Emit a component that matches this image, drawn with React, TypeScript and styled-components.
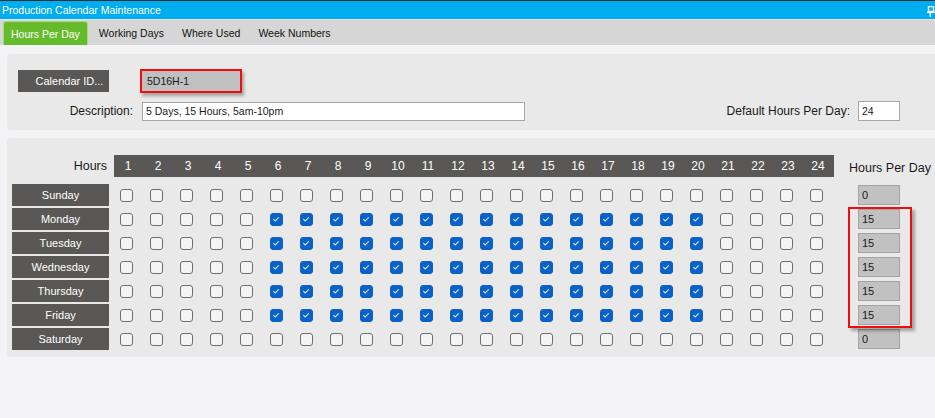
import React from "react";
import styled, { createGlobalStyle } from "styled-components";

const GlobalStyle = createGlobalStyle`
  html, body {
    margin: 0;
    padding: 0;
    background: #f3f3f5;
    font-family: "Liberation Sans", Arial, sans-serif;
    font-size: 12px;
    color: #1a1a1a;
    overflow: hidden;
  }
`;

const Page = styled.div`
  width: 935px;
  height: 418px;
  background: #f3f3f5;
  overflow: hidden;
`;

const TitleBar = styled.div`
  height: 18px;
  border-top: 1px solid #2d2d2d;
  background: #00adef;
  color: #fff;
  display: flex;
  align-items: center;
  justify-content: space-between;
  padding-left: 2px;
  font-size: 10.5px;
  border-bottom: 1px solid #e4e4e4;
`;

const PinIcon = () => (
  <svg width="8" height="11" viewBox="0 0 8 11" style={{ marginTop: 3 }}>
    <rect x="1.5" y="0.5" width="5" height="5" fill="none" stroke="#fff" strokeWidth="1.4" />
    <rect x="0" y="5.5" width="8" height="1.6" fill="#fff" />
    <rect x="2.6" y="7" width="1.4" height="4" fill="#fff" />
  </svg>
);

const TabStrip = styled.div`
  height: 25px;
  background: #d6d6d6;
  display: flex;
  align-items: flex-end;
  padding-left: 3px;
`;

const Tab = styled.div<{ $active?: boolean }>`
  height: ${(p) => (p.$active ? "24px" : "25px")};
  box-sizing: border-box;
  padding: 0 ${(p) => (p.$active ? "7px" : "9px")};
  margin-right: ${(p) => (p.$active ? "2px" : "0")};
  display: flex;
  align-items: center;
  font-size: 10.5px;
  color: ${(p) => (p.$active ? "#fff" : "#111")};
  background: ${(p) => (p.$active ? "#66bb2d" : "transparent")};
  border: ${(p) => (p.$active ? "1px solid #a9da7d" : "none")};
  border-bottom: none;
  border-radius: 3px 3px 0 0;
`;

const Panel = styled.div<{ $pt: number; $pb: number }>`
  margin: 0 -6px 0 7px;
  background: #e9e9e9;
  border-radius: 4px;
  padding: ${(p) => p.$pt}px 0 ${(p) => p.$pb}px 0;
`;

const TopPanel = styled(Panel)`
  margin-top: 9px;
  display: flex;
  flex-direction: column;
  gap: 8px;
`;

const BottomPanel = styled(Panel)`
  margin-top: 8px;
  padding-left: 5px;
`;

const FormRow = styled.div`
  display: flex;
  align-items: center;
  padding-right: 41px;
`;

const DarkButton = styled.div`
  margin-left: 11px;
  width: 91px;
  height: 22px;
  background: #595856;
  color: #fff;
  font-size: 11px;
  display: flex;
  align-items: center;
  justify-content: center;
  padding-left: 12px;
  box-sizing: border-box;
`;

const IdField = styled.div`
  margin-left: 31px;
  width: 93px;
  height: 20px;
  border: 2px solid #f20d0d;
  background: #c0c0c0;
  display: flex;
  align-items: center;
  padding-left: 5px;
  font-size: 10.5px;
  box-sizing: content-box;
  box-shadow: 2px 3px 3px rgba(0, 0, 0, 0.3);
`;

const Label = styled.div<{ $w?: number }>`
  width: ${(p) => (p.$w ? `${p.$w}px` : "auto")};
  text-align: right;
`;

const TextBox = styled.div<{ $w: number; $h?: number; $ml: number }>`
  width: ${(p) => p.$w}px;
  height: ${(p) => p.$h ?? 19}px;
  margin-left: ${(p) => p.$ml}px;
  box-sizing: border-box;
  background: #fff;
  border: 1px solid #a7a7a7;
  display: flex;
  align-items: center;
  padding-left: 3px;
  font-size: 10.5px;
`;

const Spacer = styled.div`
  flex: 1;
`;

const HeaderRow = styled.div`
  display: flex;
  align-items: center;
  height: 22px;
  margin-bottom: 7px;
`;

const HoursLabel = styled.div`
  width: 95px;
  padding-right: 2px;
  text-align: right;
  font-size: 12.5px;
  margin-right: 5px;
`;

const HourBar = styled.div`
  width: 720px;
  height: 22px;
  background: #595856;
  display: grid;
  grid-template-columns: repeat(24, 30px);
  align-items: center;
  color: #fff;
  font-size: 12px;
`;

const HourNum = styled.div`
  text-align: center;
  padding-right: 2px;
`;

const PerDayLabel = styled.div`
  margin-left: 15px;
  margin-top: 3px;
  font-size: 12.5px;
`;

const Body = styled.div`
  display: grid;
  grid-template-columns: 99px repeat(24, 30px) 27px 42px;
  grid-auto-rows: 22px;
  row-gap: 2px;
  align-items: center;
`;

const DayLabel = styled.div`
  width: 97px;
  height: 22px;
  background: #595856;
  color: #fff;
  font-size: 11px;
  display: flex;
  align-items: center;
  justify-content: center;
`;

const Cell = styled.div`
  display: flex;
  justify-content: center;
  align-items: center;
`;

const Box = styled.div<{ $on: boolean }>`
  width: 13px;
  height: 13px;
  box-sizing: border-box;
  border-radius: 3px;
  border: 1.5px solid ${(p) => (p.$on ? "#0a62c6" : "#6f6f6f")};
  background: ${(p) => (p.$on ? "#0a62c6" : "#f4f4f4")};
  display: flex;
  align-items: center;
  justify-content: center;
`;

const Total = styled.div`
  grid-column: 27;
  align-self: start;
  margin-top: 1px;
  height: 20px;
  box-sizing: border-box;
  background: #c1c1c1;
  border: 1px solid #a3a3a3;
  display: flex;
  align-items: center;
  padding-left: 3px;
  font-size: 11px;
`;

const Highlight = styled.div`
  grid-column: 27;
  grid-row: 2 / 7;
  align-self: stretch;
  margin: -1px -12px -2px -10px;
  border: 2px solid #f20d0d;
  box-shadow: 3px 3px 3px rgba(0, 0, 0, 0.3);
  pointer-events: none;
`;

const Tick = () => (
  <svg width="10" height="10" viewBox="0 0 10 10">
    <polyline points="2.3,5.2 4.2,7 7.8,3.3" fill="none" stroke="#d3e3f6" strokeWidth="1.1" />
  </svg>
);

const days = ["Sunday", "Monday", "Tuesday", "Wednesday", "Thursday", "Friday", "Saturday"];
const hours = Array.from({ length: 24 }, (_, i) => i + 1);
const isOn = (d: number, h: number) => d >= 1 && d <= 5 && h >= 6 && h <= 20;

export default function App() {
  return (
    <Page>
      <GlobalStyle />
      <TitleBar>
        <span>Production Calendar Maintenance</span>
        <PinIcon />
      </TitleBar>
      <TabStrip>
        <Tab $active>Hours Per Day</Tab>
        <Tab>Working Days</Tab>
        <Tab>Where Used</Tab>
        <Tab>Week Numbers</Tab>
      </TabStrip>

      <TopPanel $pt={15} $pb={9}>
        <FormRow>
          <DarkButton>Calendar ID...</DarkButton>
          <IdField>5D16H-1</IdField>
        </FormRow>
        <FormRow>
          <Label $w={126}>Description:</Label>
          <TextBox $w={383} $ml={9}>5 Days, 15 Hours, 5am-10pm</TextBox>
          <Spacer />
          <Label>Default Hours Per Day:</Label>
          <TextBox $w={42} $h={20} $ml={8}>24</TextBox>
        </FormRow>
      </TopPanel>

      <BottomPanel $pt={17} $pb={7}>
        <HeaderRow>
          <HoursLabel>Hours</HoursLabel>
          <HourBar>
            {hours.map((h) => (
              <HourNum key={h}>{h}</HourNum>
            ))}
          </HourBar>
          <PerDayLabel>Hours Per Day</PerDayLabel>
        </HeaderRow>
        <Body>
          {days.map((d, di) => (
            <React.Fragment key={d}>
              <DayLabel style={{ gridRow: di + 1 }}>{d}</DayLabel>
              {hours.map((h) => (
                <Cell key={h} style={{ gridRow: di + 1 }}>
                  <Box $on={isOn(di, h)}>{isOn(di, h) && <Tick />}</Box>
                </Cell>
              ))}
              <Total style={{ gridRow: di + 1 }}>{di >= 1 && di <= 5 ? 15 : 0}</Total>
            </React.Fragment>
          ))}
          <Highlight />
        </Body>
      </BottomPanel>
    </Page>
  );
}
